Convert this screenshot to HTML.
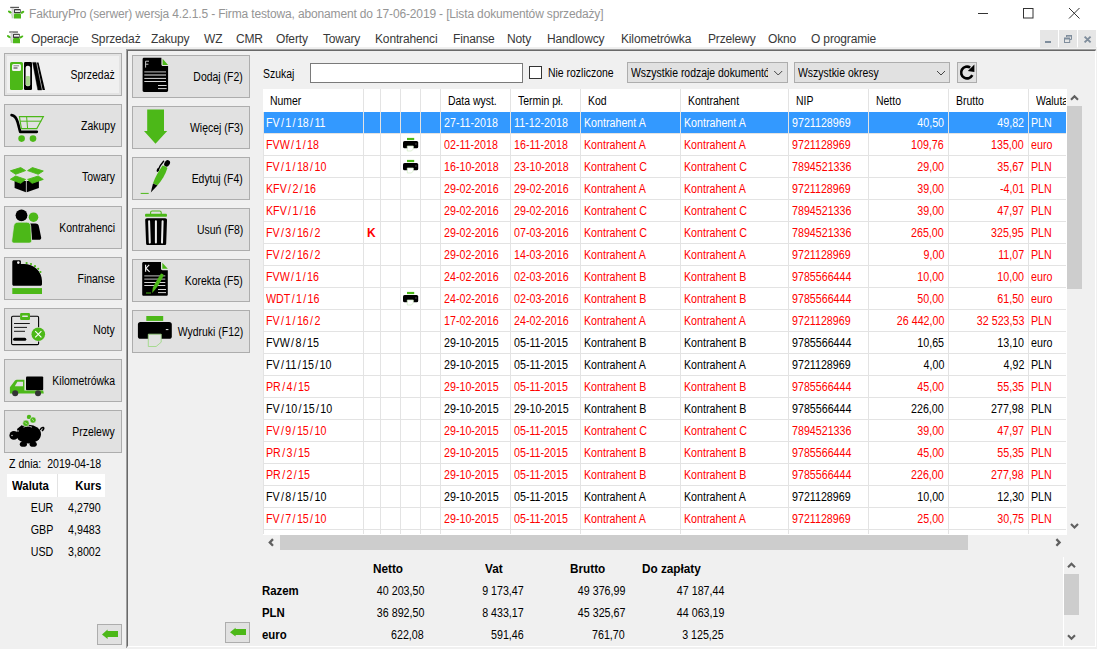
<!DOCTYPE html><html><head><meta charset="utf-8"><style>
*{margin:0;padding:0;box-sizing:border-box}
html,body{width:1097px;height:649px;overflow:hidden;background:#f0f0f0;font-family:"Liberation Sans",sans-serif;font-size:11px;color:#000;position:relative}
.a{position:absolute}
.t{position:absolute;white-space:nowrap;line-height:13px;height:13px}
.g{font-size:12px;transform:scaleX(0.89);transform-origin:0 0}
.g.ra{transform-origin:100% 0}
.r{color:#ff0000}
.w{color:#fff}
.btn{position:absolute;background:#e1e1e1;border:1px solid #adadad}
.bl{position:absolute;right:6px;top:15px;font-size:11px;line-height:13px;text-align:right;white-space:nowrap;letter-spacing:-0.2px}
</style></head><body>
<div class="a" style="left:0;top:0;width:1097px;height:47px;background:#fff"></div>
<div class="t " style="left:29px;top:8px;font-size:12px;line-height:12px;height:12px;color:#959595;letter-spacing:-0.15px">FakturyPro (serwer) wersja 4.2.1.5 - Firma testowa, abonament do 17-06-2019 - [Lista dokumentów sprzedaży]</div>
<div class="t " style="left:31px;top:33px;font-size:12px;line-height:12px;height:12px;color:#383838;letter-spacing:-0.15px">Operacje</div>
<div class="t " style="left:91px;top:33px;font-size:12px;line-height:12px;height:12px;color:#383838;letter-spacing:-0.15px">Sprzedaż</div>
<div class="t " style="left:151px;top:33px;font-size:12px;line-height:12px;height:12px;color:#383838;letter-spacing:-0.15px">Zakupy</div>
<div class="t " style="left:204px;top:33px;font-size:12px;line-height:12px;height:12px;color:#383838;letter-spacing:-0.15px">WZ</div>
<div class="t " style="left:236px;top:33px;font-size:12px;line-height:12px;height:12px;color:#383838;letter-spacing:-0.15px">CMR</div>
<div class="t " style="left:276px;top:33px;font-size:12px;line-height:12px;height:12px;color:#383838;letter-spacing:-0.15px">Oferty</div>
<div class="t " style="left:323px;top:33px;font-size:12px;line-height:12px;height:12px;color:#383838;letter-spacing:-0.15px">Towary</div>
<div class="t " style="left:375px;top:33px;font-size:12px;line-height:12px;height:12px;color:#383838;letter-spacing:-0.15px">Kontrahenci</div>
<div class="t " style="left:453px;top:33px;font-size:12px;line-height:12px;height:12px;color:#383838;letter-spacing:-0.15px">Finanse</div>
<div class="t " style="left:507px;top:33px;font-size:12px;line-height:12px;height:12px;color:#383838;letter-spacing:-0.15px">Noty</div>
<div class="t " style="left:547px;top:33px;font-size:12px;line-height:12px;height:12px;color:#383838;letter-spacing:-0.15px">Handlowcy</div>
<div class="t " style="left:621px;top:33px;font-size:12px;line-height:12px;height:12px;color:#383838;letter-spacing:-0.15px">Kilometrówka</div>
<div class="t " style="left:708px;top:33px;font-size:12px;line-height:12px;height:12px;color:#383838;letter-spacing:-0.15px">Przelewy</div>
<div class="t " style="left:768px;top:33px;font-size:12px;line-height:12px;height:12px;color:#383838;letter-spacing:-0.15px">Okno</div>
<div class="t " style="left:811px;top:33px;font-size:12px;line-height:12px;height:12px;color:#383838;letter-spacing:-0.15px">O programie</div>
<div class="a" style="left:1040px;top:30px;width:18px;height:18px;background:#e6e6e6"></div>
<div class="a" style="left:1059px;top:30px;width:18px;height:18px;background:#e6e6e6"></div>
<div class="a" style="left:1078px;top:30px;width:18px;height:18px;background:#e6e6e6"></div>
<div class="a" style="left:126px;top:49px;width:970px;height:599px;border-left:1px solid #a0a0a0;border-top:1px solid #a0a0a0"></div>
<div class="a" style="left:127px;top:50px;width:969px;height:597px;border-left:1px solid #696969;border-top:1px solid #696969;border-right:1px solid #fff;border-bottom:1px solid #fff"></div>
<div class="btn" style="left:4px;top:53px;width:118px;height:43px;background:#f0f0f0;box-shadow:inset 0 0 0 2px #e3e3e3"></div>
<div class="t g ra" style="left:0px;top:69px;right:982px;left:auto;transform:scaleX(0.87)">Sprzedaż</div>
<div class="btn" style="left:4px;top:104px;width:118px;height:43px"></div>
<div class="t g ra" style="left:0px;top:120px;right:982px;left:auto;transform:scaleX(0.87)">Zakupy</div>
<div class="btn" style="left:4px;top:155px;width:118px;height:43px"></div>
<div class="t g ra" style="left:0px;top:171px;right:982px;left:auto;transform:scaleX(0.87)">Towary</div>
<div class="btn" style="left:4px;top:206px;width:118px;height:43px"></div>
<div class="t g ra" style="left:0px;top:222px;right:982px;left:auto;transform:scaleX(0.87)">Kontrahenci</div>
<div class="btn" style="left:4px;top:257px;width:118px;height:43px"></div>
<div class="t g ra" style="left:0px;top:273px;right:982px;left:auto;transform:scaleX(0.87)">Finanse</div>
<div class="btn" style="left:4px;top:308px;width:118px;height:43px"></div>
<div class="t g ra" style="left:0px;top:324px;right:982px;left:auto;transform:scaleX(0.87)">Noty</div>
<div class="btn" style="left:4px;top:359px;width:118px;height:43px"></div>
<div class="t g ra" style="left:0px;top:375px;right:982px;left:auto;transform:scaleX(0.87)">Kilometrówka</div>
<div class="btn" style="left:4px;top:410px;width:118px;height:43px"></div>
<div class="t g ra" style="left:0px;top:426px;right:982px;left:auto;transform:scaleX(0.87)">Przelewy</div>
<div class="btn" style="left:132px;top:55px;width:118px;height:43px"></div>
<div class="t g ra" style="left:0px;top:71px;right:854px;left:auto;transform:scaleX(0.87)">Dodaj (F2)</div>
<div class="btn" style="left:132px;top:106px;width:118px;height:43px"></div>
<div class="t g ra" style="left:0px;top:122px;right:854px;left:auto;transform:scaleX(0.87)">Więcej (F3)</div>
<div class="btn" style="left:132px;top:157px;width:118px;height:43px"></div>
<div class="t g ra" style="left:0px;top:173px;right:854px;left:auto;transform:scaleX(0.87)">Edytuj (F4)</div>
<div class="btn" style="left:132px;top:208px;width:118px;height:43px"></div>
<div class="t g ra" style="left:0px;top:224px;right:854px;left:auto;transform:scaleX(0.87)">Usuń (F8)</div>
<div class="btn" style="left:132px;top:259px;width:118px;height:43px"></div>
<div class="t g ra" style="left:0px;top:275px;right:854px;left:auto;transform:scaleX(0.87)">Korekta (F5)</div>
<div class="btn" style="left:132px;top:310px;width:118px;height:43px"></div>
<div class="t g ra" style="left:0px;top:326px;right:854px;left:auto;transform:scaleX(0.87)">Wydruki (F12)</div>
<div class="t g" style="left:263px;top:68px;transform:scaleX(0.87)">Szukaj</div>
<div class="a" style="left:310px;top:63px;width:213px;height:20px;background:#fff;border:1px solid #7a7a7a"></div>
<div class="a" style="left:529px;top:66px;width:13px;height:13px;background:#fff;border:1px solid #333"></div>
<div class="t g" style="left:548px;top:67px;transform:scaleX(0.87)">Nie rozliczone</div>
<div class="a" style="left:627px;top:62px;width:161px;height:21px;background:#e1e1e1;border:1px solid #adadad"></div>
<div class="a" style="left:631px;top:67px;width:137px;height:14px;overflow:hidden"><div class="t g" style="left:0px;top:0px;transform:scaleX(0.87)">Wszystkie rodzaje dokumentów</div></div>
<div class="a" style="left:794px;top:62px;width:156px;height:21px;background:#e1e1e1;border:1px solid #adadad"></div>
<div class="t g" style="left:798px;top:67px;transform:scaleX(0.87)">Wszystkie okresy</div>
<div class="a" style="left:957px;top:62px;width:20px;height:21px;background:#e1e1e1;border:1px solid #adadad"></div>
<div class="a" style="left:263px;top:89px;width:804px;height:446px;background:#fff"></div>
<div class="a" style="left:264px;top:112px;width:802px;height:21px;background:#3399ff"></div>
<div class="a" style="left:264px;top:133px;width:802px;height:1px;background:#e3e3e3"></div>
<div class="a" style="left:264px;top:155px;width:802px;height:1px;background:#e3e3e3"></div>
<div class="a" style="left:264px;top:177px;width:802px;height:1px;background:#e3e3e3"></div>
<div class="a" style="left:264px;top:199px;width:802px;height:1px;background:#e3e3e3"></div>
<div class="a" style="left:264px;top:221px;width:802px;height:1px;background:#e3e3e3"></div>
<div class="a" style="left:264px;top:243px;width:802px;height:1px;background:#e3e3e3"></div>
<div class="a" style="left:264px;top:265px;width:802px;height:1px;background:#e3e3e3"></div>
<div class="a" style="left:264px;top:287px;width:802px;height:1px;background:#e3e3e3"></div>
<div class="a" style="left:264px;top:309px;width:802px;height:1px;background:#e3e3e3"></div>
<div class="a" style="left:264px;top:331px;width:802px;height:1px;background:#e3e3e3"></div>
<div class="a" style="left:264px;top:353px;width:802px;height:1px;background:#e3e3e3"></div>
<div class="a" style="left:264px;top:375px;width:802px;height:1px;background:#e3e3e3"></div>
<div class="a" style="left:264px;top:397px;width:802px;height:1px;background:#e3e3e3"></div>
<div class="a" style="left:264px;top:419px;width:802px;height:1px;background:#e3e3e3"></div>
<div class="a" style="left:264px;top:441px;width:802px;height:1px;background:#e3e3e3"></div>
<div class="a" style="left:264px;top:463px;width:802px;height:1px;background:#e3e3e3"></div>
<div class="a" style="left:264px;top:485px;width:802px;height:1px;background:#e3e3e3"></div>
<div class="a" style="left:264px;top:507px;width:802px;height:1px;background:#e3e3e3"></div>
<div class="a" style="left:264px;top:529px;width:802px;height:1px;background:#e3e3e3"></div>
<div class="a" style="left:363px;top:89px;width:1px;height:445px;background:#e3e3e3"></div>
<div class="a" style="left:380px;top:89px;width:1px;height:445px;background:#e3e3e3"></div>
<div class="a" style="left:400px;top:89px;width:1px;height:445px;background:#e3e3e3"></div>
<div class="a" style="left:420px;top:89px;width:1px;height:445px;background:#e3e3e3"></div>
<div class="a" style="left:440px;top:89px;width:1px;height:445px;background:#e3e3e3"></div>
<div class="a" style="left:510px;top:89px;width:1px;height:445px;background:#e3e3e3"></div>
<div class="a" style="left:580px;top:89px;width:1px;height:445px;background:#e3e3e3"></div>
<div class="a" style="left:680px;top:89px;width:1px;height:445px;background:#e3e3e3"></div>
<div class="a" style="left:788px;top:89px;width:1px;height:445px;background:#e3e3e3"></div>
<div class="a" style="left:868px;top:89px;width:1px;height:445px;background:#e3e3e3"></div>
<div class="a" style="left:948px;top:89px;width:1px;height:445px;background:#e3e3e3"></div>
<div class="a" style="left:1028px;top:89px;width:1px;height:445px;background:#e3e3e3"></div>
<div class="a" style="left:263px;top:112px;width:1px;height:422px;background:#e3e3e3"></div>
<div class="t g" style="left:270px;top:95px;transform:scaleX(0.87)">Numer</div>
<div class="t g" style="left:448px;top:95px;transform:scaleX(0.87)">Data wyst.</div>
<div class="t g" style="left:518px;top:95px;transform:scaleX(0.87)">Termin pł.</div>
<div class="t g" style="left:588px;top:95px;transform:scaleX(0.87)">Kod</div>
<div class="t g" style="left:688px;top:95px;transform:scaleX(0.87)">Kontrahent</div>
<div class="t g" style="left:796px;top:95px;transform:scaleX(0.87)">NIP</div>
<div class="t g" style="left:876px;top:95px;transform:scaleX(0.87)">Netto</div>
<div class="t g" style="left:956px;top:95px;transform:scaleX(0.87)">Brutto</div>
<div class="a" style="left:1036px;top:95px;width:30px;height:14px;overflow:hidden"><div class="t g" style="left:0px;top:0px;transform:scaleX(0.87)">Waluta</div></div>
<div class="t w g" style="left:266px;top:117px;">FV<span style="margin:0 1.5px">/</span>1<span style="margin:0 1.5px">/</span>18<span style="margin:0 1.5px">/</span>11</div>
<div class="t w g" style="left:444px;top:117px;">27-11-2018</div>
<div class="t w g" style="left:514px;top:117px;">11-12-2018</div>
<div class="t w g" style="left:584px;top:117px;">Kontrahent A</div>
<div class="t w g" style="left:684px;top:117px;">Kontrahent A</div>
<div class="t w g" style="left:792px;top:117px;">9721128969</div>
<div class="t w g ra" style="left:0px;top:117px;left:auto;right:153px">40,50</div>
<div class="t w g ra" style="left:0px;top:117px;left:auto;right:73px">49,82</div>
<div class="t w g" style="left:1031px;top:117px;">PLN</div>
<div class="t r g" style="left:266px;top:139px;">FVW<span style="margin:0 1.5px">/</span>1<span style="margin:0 1.5px">/</span>18</div>
<div class="t r g" style="left:444px;top:139px;">02-11-2018</div>
<div class="t r g" style="left:514px;top:139px;">16-11-2018</div>
<div class="t r g" style="left:584px;top:139px;">Kontrahent A</div>
<div class="t r g" style="left:684px;top:139px;">Kontrahent A</div>
<div class="t r g" style="left:792px;top:139px;">9721128969</div>
<div class="t r g ra" style="left:0px;top:139px;left:auto;right:153px">109,76</div>
<div class="t r g ra" style="left:0px;top:139px;left:auto;right:73px">135,00</div>
<div class="t r g" style="left:1031px;top:139px;">euro</div>
<div class="t r g" style="left:266px;top:161px;">FV<span style="margin:0 1.5px">/</span>1<span style="margin:0 1.5px">/</span>18<span style="margin:0 1.5px">/</span>10</div>
<div class="t r g" style="left:444px;top:161px;">16-10-2018</div>
<div class="t r g" style="left:514px;top:161px;">23-10-2018</div>
<div class="t r g" style="left:584px;top:161px;">Kontrahent C</div>
<div class="t r g" style="left:684px;top:161px;">Kontrahent C</div>
<div class="t r g" style="left:792px;top:161px;">7894521336</div>
<div class="t r g ra" style="left:0px;top:161px;left:auto;right:153px">29,00</div>
<div class="t r g ra" style="left:0px;top:161px;left:auto;right:73px">35,67</div>
<div class="t r g" style="left:1031px;top:161px;">PLN</div>
<div class="t r g" style="left:266px;top:183px;">KFV<span style="margin:0 1.5px">/</span>2<span style="margin:0 1.5px">/</span>16</div>
<div class="t r g" style="left:444px;top:183px;">29-02-2016</div>
<div class="t r g" style="left:514px;top:183px;">29-02-2016</div>
<div class="t r g" style="left:584px;top:183px;">Kontrahent A</div>
<div class="t r g" style="left:684px;top:183px;">Kontrahent A</div>
<div class="t r g" style="left:792px;top:183px;">9721128969</div>
<div class="t r g ra" style="left:0px;top:183px;left:auto;right:153px">39,00</div>
<div class="t r g ra" style="left:0px;top:183px;left:auto;right:73px">-4,01</div>
<div class="t r g" style="left:1031px;top:183px;">PLN</div>
<div class="t r g" style="left:266px;top:205px;">KFV<span style="margin:0 1.5px">/</span>1<span style="margin:0 1.5px">/</span>16</div>
<div class="t r g" style="left:444px;top:205px;">29-02-2016</div>
<div class="t r g" style="left:514px;top:205px;">29-02-2016</div>
<div class="t r g" style="left:584px;top:205px;">Kontrahent C</div>
<div class="t r g" style="left:684px;top:205px;">Kontrahent C</div>
<div class="t r g" style="left:792px;top:205px;">7894521336</div>
<div class="t r g ra" style="left:0px;top:205px;left:auto;right:153px">39,00</div>
<div class="t r g ra" style="left:0px;top:205px;left:auto;right:73px">47,97</div>
<div class="t r g" style="left:1031px;top:205px;">PLN</div>
<div class="t r g" style="left:266px;top:227px;">FV<span style="margin:0 1.5px">/</span>3<span style="margin:0 1.5px">/</span>16<span style="margin:0 1.5px">/</span>2</div>
<div class="t r" style="left:367px;top:227px;font-weight:bold;font-size:12px">K</div>
<div class="t r g" style="left:444px;top:227px;">29-02-2016</div>
<div class="t r g" style="left:514px;top:227px;">07-03-2016</div>
<div class="t r g" style="left:584px;top:227px;">Kontrahent C</div>
<div class="t r g" style="left:684px;top:227px;">Kontrahent C</div>
<div class="t r g" style="left:792px;top:227px;">7894521336</div>
<div class="t r g ra" style="left:0px;top:227px;left:auto;right:153px">265,00</div>
<div class="t r g ra" style="left:0px;top:227px;left:auto;right:73px">325,95</div>
<div class="t r g" style="left:1031px;top:227px;">PLN</div>
<div class="t r g" style="left:266px;top:249px;">FV<span style="margin:0 1.5px">/</span>2<span style="margin:0 1.5px">/</span>16<span style="margin:0 1.5px">/</span>2</div>
<div class="t r g" style="left:444px;top:249px;">29-02-2016</div>
<div class="t r g" style="left:514px;top:249px;">14-03-2016</div>
<div class="t r g" style="left:584px;top:249px;">Kontrahent A</div>
<div class="t r g" style="left:684px;top:249px;">Kontrahent A</div>
<div class="t r g" style="left:792px;top:249px;">9721128969</div>
<div class="t r g ra" style="left:0px;top:249px;left:auto;right:153px">9,00</div>
<div class="t r g ra" style="left:0px;top:249px;left:auto;right:73px">11,07</div>
<div class="t r g" style="left:1031px;top:249px;">PLN</div>
<div class="t r g" style="left:266px;top:271px;">FVW<span style="margin:0 1.5px">/</span>1<span style="margin:0 1.5px">/</span>16</div>
<div class="t r g" style="left:444px;top:271px;">24-02-2016</div>
<div class="t r g" style="left:514px;top:271px;">02-03-2016</div>
<div class="t r g" style="left:584px;top:271px;">Kontrahent B</div>
<div class="t r g" style="left:684px;top:271px;">Kontrahent B</div>
<div class="t r g" style="left:792px;top:271px;">9785566444</div>
<div class="t r g ra" style="left:0px;top:271px;left:auto;right:153px">10,00</div>
<div class="t r g ra" style="left:0px;top:271px;left:auto;right:73px">10,00</div>
<div class="t r g" style="left:1031px;top:271px;">euro</div>
<div class="t r g" style="left:266px;top:293px;">WDT<span style="margin:0 1.5px">/</span>1<span style="margin:0 1.5px">/</span>16</div>
<div class="t r g" style="left:444px;top:293px;">24-02-2016</div>
<div class="t r g" style="left:514px;top:293px;">02-03-2016</div>
<div class="t r g" style="left:584px;top:293px;">Kontrahent B</div>
<div class="t r g" style="left:684px;top:293px;">Kontrahent B</div>
<div class="t r g" style="left:792px;top:293px;">9785566444</div>
<div class="t r g ra" style="left:0px;top:293px;left:auto;right:153px">50,00</div>
<div class="t r g ra" style="left:0px;top:293px;left:auto;right:73px">61,50</div>
<div class="t r g" style="left:1031px;top:293px;">euro</div>
<div class="t r g" style="left:266px;top:315px;">FV<span style="margin:0 1.5px">/</span>1<span style="margin:0 1.5px">/</span>16<span style="margin:0 1.5px">/</span>2</div>
<div class="t r g" style="left:444px;top:315px;">17-02-2016</div>
<div class="t r g" style="left:514px;top:315px;">24-02-2016</div>
<div class="t r g" style="left:584px;top:315px;">Kontrahent A</div>
<div class="t r g" style="left:684px;top:315px;">Kontrahent A</div>
<div class="t r g" style="left:792px;top:315px;">9721128969</div>
<div class="t r g ra" style="left:0px;top:315px;left:auto;right:153px">26 442,00</div>
<div class="t r g ra" style="left:0px;top:315px;left:auto;right:73px">32 523,53</div>
<div class="t r g" style="left:1031px;top:315px;">PLN</div>
<div class="t  g" style="left:266px;top:337px;">FVW<span style="margin:0 1.5px">/</span>8<span style="margin:0 1.5px">/</span>15</div>
<div class="t  g" style="left:444px;top:337px;">29-10-2015</div>
<div class="t  g" style="left:514px;top:337px;">05-11-2015</div>
<div class="t  g" style="left:584px;top:337px;">Kontrahent B</div>
<div class="t  g" style="left:684px;top:337px;">Kontrahent B</div>
<div class="t  g" style="left:792px;top:337px;">9785566444</div>
<div class="t  g ra" style="left:0px;top:337px;left:auto;right:153px">10,65</div>
<div class="t  g ra" style="left:0px;top:337px;left:auto;right:73px">13,10</div>
<div class="t  g" style="left:1031px;top:337px;">euro</div>
<div class="t  g" style="left:266px;top:359px;">FV<span style="margin:0 1.5px">/</span>11<span style="margin:0 1.5px">/</span>15<span style="margin:0 1.5px">/</span>10</div>
<div class="t  g" style="left:444px;top:359px;">29-10-2015</div>
<div class="t  g" style="left:514px;top:359px;">05-11-2015</div>
<div class="t  g" style="left:584px;top:359px;">Kontrahent A</div>
<div class="t  g" style="left:684px;top:359px;">Kontrahent A</div>
<div class="t  g" style="left:792px;top:359px;">9721128969</div>
<div class="t  g ra" style="left:0px;top:359px;left:auto;right:153px">4,00</div>
<div class="t  g ra" style="left:0px;top:359px;left:auto;right:73px">4,92</div>
<div class="t  g" style="left:1031px;top:359px;">PLN</div>
<div class="t r g" style="left:266px;top:381px;">PR<span style="margin:0 1.5px">/</span>4<span style="margin:0 1.5px">/</span>15</div>
<div class="t r g" style="left:444px;top:381px;">29-10-2015</div>
<div class="t r g" style="left:514px;top:381px;">05-11-2015</div>
<div class="t r g" style="left:584px;top:381px;">Kontrahent B</div>
<div class="t r g" style="left:684px;top:381px;">Kontrahent B</div>
<div class="t r g" style="left:792px;top:381px;">9785566444</div>
<div class="t r g ra" style="left:0px;top:381px;left:auto;right:153px">45,00</div>
<div class="t r g ra" style="left:0px;top:381px;left:auto;right:73px">55,35</div>
<div class="t r g" style="left:1031px;top:381px;">PLN</div>
<div class="t  g" style="left:266px;top:403px;">FV<span style="margin:0 1.5px">/</span>10<span style="margin:0 1.5px">/</span>15<span style="margin:0 1.5px">/</span>10</div>
<div class="t  g" style="left:444px;top:403px;">29-10-2015</div>
<div class="t  g" style="left:514px;top:403px;">29-10-2015</div>
<div class="t  g" style="left:584px;top:403px;">Kontrahent B</div>
<div class="t  g" style="left:684px;top:403px;">Kontrahent B</div>
<div class="t  g" style="left:792px;top:403px;">9785566444</div>
<div class="t  g ra" style="left:0px;top:403px;left:auto;right:153px">226,00</div>
<div class="t  g ra" style="left:0px;top:403px;left:auto;right:73px">277,98</div>
<div class="t  g" style="left:1031px;top:403px;">PLN</div>
<div class="t r g" style="left:266px;top:425px;">FV<span style="margin:0 1.5px">/</span>9<span style="margin:0 1.5px">/</span>15<span style="margin:0 1.5px">/</span>10</div>
<div class="t r g" style="left:444px;top:425px;">29-10-2015</div>
<div class="t r g" style="left:514px;top:425px;">05-11-2015</div>
<div class="t r g" style="left:584px;top:425px;">Kontrahent C</div>
<div class="t r g" style="left:684px;top:425px;">Kontrahent C</div>
<div class="t r g" style="left:792px;top:425px;">7894521336</div>
<div class="t r g ra" style="left:0px;top:425px;left:auto;right:153px">39,00</div>
<div class="t r g ra" style="left:0px;top:425px;left:auto;right:73px">47,97</div>
<div class="t r g" style="left:1031px;top:425px;">PLN</div>
<div class="t r g" style="left:266px;top:447px;">PR<span style="margin:0 1.5px">/</span>3<span style="margin:0 1.5px">/</span>15</div>
<div class="t r g" style="left:444px;top:447px;">29-10-2015</div>
<div class="t r g" style="left:514px;top:447px;">05-11-2015</div>
<div class="t r g" style="left:584px;top:447px;">Kontrahent B</div>
<div class="t r g" style="left:684px;top:447px;">Kontrahent B</div>
<div class="t r g" style="left:792px;top:447px;">9785566444</div>
<div class="t r g ra" style="left:0px;top:447px;left:auto;right:153px">45,00</div>
<div class="t r g ra" style="left:0px;top:447px;left:auto;right:73px">55,35</div>
<div class="t r g" style="left:1031px;top:447px;">PLN</div>
<div class="t r g" style="left:266px;top:469px;">PR<span style="margin:0 1.5px">/</span>2<span style="margin:0 1.5px">/</span>15</div>
<div class="t r g" style="left:444px;top:469px;">29-10-2015</div>
<div class="t r g" style="left:514px;top:469px;">05-11-2015</div>
<div class="t r g" style="left:584px;top:469px;">Kontrahent B</div>
<div class="t r g" style="left:684px;top:469px;">Kontrahent B</div>
<div class="t r g" style="left:792px;top:469px;">9785566444</div>
<div class="t r g ra" style="left:0px;top:469px;left:auto;right:153px">226,00</div>
<div class="t r g ra" style="left:0px;top:469px;left:auto;right:73px">277,98</div>
<div class="t r g" style="left:1031px;top:469px;">PLN</div>
<div class="t  g" style="left:266px;top:491px;">FV<span style="margin:0 1.5px">/</span>8<span style="margin:0 1.5px">/</span>15<span style="margin:0 1.5px">/</span>10</div>
<div class="t  g" style="left:444px;top:491px;">29-10-2015</div>
<div class="t  g" style="left:514px;top:491px;">05-11-2015</div>
<div class="t  g" style="left:584px;top:491px;">Kontrahent A</div>
<div class="t  g" style="left:684px;top:491px;">Kontrahent A</div>
<div class="t  g" style="left:792px;top:491px;">9721128969</div>
<div class="t  g ra" style="left:0px;top:491px;left:auto;right:153px">10,00</div>
<div class="t  g ra" style="left:0px;top:491px;left:auto;right:73px">12,30</div>
<div class="t  g" style="left:1031px;top:491px;">PLN</div>
<div class="t r g" style="left:266px;top:513px;">FV<span style="margin:0 1.5px">/</span>7<span style="margin:0 1.5px">/</span>15<span style="margin:0 1.5px">/</span>10</div>
<div class="t r g" style="left:444px;top:513px;">29-10-2015</div>
<div class="t r g" style="left:514px;top:513px;">05-11-2015</div>
<div class="t r g" style="left:584px;top:513px;">Kontrahent A</div>
<div class="t r g" style="left:684px;top:513px;">Kontrahent A</div>
<div class="t r g" style="left:792px;top:513px;">9721128969</div>
<div class="t r g ra" style="left:0px;top:513px;left:auto;right:153px">25,00</div>
<div class="t r g ra" style="left:0px;top:513px;left:auto;right:73px">30,75</div>
<div class="t r g" style="left:1031px;top:513px;">PLN</div>
<div class="a" style="left:1067px;top:106px;width:15px;height:183px;background:#cdcdcd"></div>
<div class="a" style="left:280px;top:535px;width:688px;height:15px;background:#cdcdcd"></div>
<div class="t g" style="left:373px;top:563px;font-weight:bold;transform:scaleX(0.98)">Netto</div>
<div class="t g" style="left:485px;top:563px;font-weight:bold;transform:scaleX(0.98)">Vat</div>
<div class="t g" style="left:570px;top:563px;font-weight:bold;transform:scaleX(0.98)">Brutto</div>
<div class="t g" style="left:642px;top:563px;font-weight:bold;transform:scaleX(0.98)">Do zapłaty</div>
<div class="t g" style="left:262px;top:585px;font-weight:bold;transform:scaleX(0.95)">Razem</div>
<div class="t g ra" style="left:0px;top:585px;left:auto;right:673px">40 203,50</div>
<div class="t g ra" style="left:0px;top:585px;left:auto;right:573px">9 173,47</div>
<div class="t g ra" style="left:0px;top:585px;left:auto;right:472px">49 376,99</div>
<div class="t g ra" style="left:0px;top:585px;left:auto;right:373px">47 187,44</div>
<div class="t g" style="left:262px;top:607px;font-weight:bold;transform:scaleX(0.95)">PLN</div>
<div class="t g ra" style="left:0px;top:607px;left:auto;right:673px">36 892,50</div>
<div class="t g ra" style="left:0px;top:607px;left:auto;right:573px">8 433,17</div>
<div class="t g ra" style="left:0px;top:607px;left:auto;right:472px">45 325,67</div>
<div class="t g ra" style="left:0px;top:607px;left:auto;right:373px">44 063,19</div>
<div class="t g" style="left:262px;top:629px;font-weight:bold;transform:scaleX(0.95)">euro</div>
<div class="t g ra" style="left:0px;top:629px;left:auto;right:673px">622,08</div>
<div class="t g ra" style="left:0px;top:629px;left:auto;right:573px">591,46</div>
<div class="t g ra" style="left:0px;top:629px;left:auto;right:472px">761,70</div>
<div class="t g ra" style="left:0px;top:629px;left:auto;right:373px">3 125,25</div>
<div class="a" style="left:1063px;top:557px;width:1px;height:89px;background:#fff"></div>
<div class="a" style="left:1064px;top:574px;width:15px;height:41px;background:#cdcdcd"></div>
<div class="t g" style="left:9px;top:458px;transform:scaleX(0.88)">Z dnia:&nbsp; 2019-04-18</div>
<div class="a" style="left:7px;top:474px;width:98px;height:23px;background:#fff"></div>
<div class="a" style="left:57px;top:474px;width:1px;height:23px;background:#e3e3e3"></div>
<div class="t g" style="left:12px;top:480px;font-weight:bold;transform:scaleX(0.95)">Waluta</div>
<div class="t g ra" style="left:0px;top:480px;right:996px;left:auto;font-weight:bold;transform:scaleX(0.95)">Kurs</div>
<div class="t g ra" style="left:0px;top:502px;left:auto;right:1044px">EUR</div>
<div class="t g ra" style="left:0px;top:502px;left:auto;right:996px">4,2790</div>
<div class="t g ra" style="left:0px;top:524px;left:auto;right:1044px">GBP</div>
<div class="t g ra" style="left:0px;top:524px;left:auto;right:996px">4,9483</div>
<div class="t g ra" style="left:0px;top:546px;left:auto;right:1044px">USD</div>
<div class="t g ra" style="left:0px;top:546px;left:auto;right:996px">3,8002</div>
<div class="btn" style="left:97px;top:624px;width:25px;height:21px"></div>
<div class="btn" style="left:225px;top:622px;width:25px;height:21px"></div>
<svg class="a" style="left:0;top:0" width="1097" height="649"><rect x="10" y="62" width="13" height="28" rx="1.6" fill="#4cb818"/>
<rect x="12" y="64" width="9" height="7" rx="1.6" fill="#f2f2f2"/>
<path d="M13.5 65.8H19" stroke="#777" stroke-width="0.9"/><path d="M13.5 68H17.5" stroke="#333" stroke-width="1"/>
<rect x="24" y="62" width="8" height="28" rx="1.2" fill="#000"/>
<rect x="25.6" y="65.8" width="4.6" height="20.4" rx="2" fill="#f2f2f2"/>
<rect x="25.9" y="76" width="4" height="9.8" rx="1" fill="#a6d68a"/>
<path d="M32.6 62.4L36.1 62.4L41.8 90L37.8 90Z" fill="#000" stroke="#000" stroke-width="0.4" stroke-linejoin="round"/>
<path d="M36.9 62.6L38.5 62.6L45 90L42.6 90Z" fill="#000"/>
<path d="M11.6 115.2C14.6 115.6 16.4 118 17.6 122L20.2 131.8H36.8" fill="none" stroke="#000" stroke-width="2.7" stroke-linecap="round" stroke-linejoin="round"/>
<path d="M19.4 116.6H43.4L36.8 128.6H21.4Z" fill="none" stroke="#4cb818" stroke-width="1.1"/>
<path d="M20.2 121.2H41.2M26.6 116.6L27.6 128.6" fill="none" stroke="#4cb818" stroke-width="1"/>
<circle cx="21.6" cy="138.6" r="3.3" fill="#4cb818"/><circle cx="33" cy="138.6" r="3.3" fill="#4cb818"/>
<path d="M14.6 181H25.9V192.2L14.6 188Z" fill="#000"/>
<path d="M26.7 181H38.9V188L26.7 192.2Z" fill="#000"/>
<path d="M10.4 170.8L20.7 167.6L25.6 170.6L15.6 174.3Z" fill="#4cb818" stroke="#4cb818" stroke-width="0.9" stroke-linejoin="round"/>
<path d="M27.6 170.6L32.4 167.6L43.3 171L38.2 174.3Z" fill="#4cb818" stroke="#4cb818" stroke-width="0.9" stroke-linejoin="round"/>
<path d="M10.4 179.3L15.6 176L25.6 179.4L20.7 183.3Z" fill="#4cb818" stroke="#4cb818" stroke-width="0.9" stroke-linejoin="round"/>
<path d="M27.6 179.4L38.2 176L43.3 179.4L32.1 183.3Z" fill="#4cb818" stroke="#4cb818" stroke-width="0.9" stroke-linejoin="round"/>
<circle cx="21.5" cy="215.3" r="5.9" fill="#000"/>
<path d="M30.2 223.6H35.4C37.6 223.6 38.6 224.6 39 227L41.2 237.4C41.4 239 40.4 239.8 39 239.8H31.8Z" fill="#000"/>
<circle cx="33.5" cy="217.2" r="4.8" fill="#4cb818"/>
<path d="M18 222.2H26.6C29.4 222.2 30.6 223.8 30.8 226.6L31.6 240.4C31.7 242.2 30.7 243.1 28.9 243.1H14.5C12.7 243.1 11.7 242.2 11.8 240.4L13.6 226.6C13.9 223.8 15.2 222.2 18 222.2Z" fill="#4cb818" stroke="#e1e1e1" stroke-width="0.7"/>
<path d="M13.8 260.2H19.6C20.4 260.2 20.9 260.7 20.9 261.5V263.9H24C33.5 263.9 42 271 42 281V284.2C42 285.1 41.4 285.7 40.5 285.7H13.8C12.9 285.7 12.3 285.1 12.3 284.2V261.7C12.3 260.8 12.9 260.2 13.8 260.2Z" fill="#000"/>
<circle cx="18.3" cy="262.6" r="1.3" fill="#f0f0f0"/>
<circle cx="26.6" cy="263" r="1.1" fill="#4cb818"/>
<circle cx="31" cy="264" r="1.1" fill="#4cb818"/>
<circle cx="35" cy="266.2" r="1.1" fill="#4cb818"/>
<circle cx="38.2" cy="268.8" r="1.1" fill="#4cb818"/>
<circle cx="40.4" cy="272" r="1.1" fill="#4cb818"/>
<rect x="12.3" y="288.1" width="29.7" height="5.9" fill="#4cb818"/>
<path d="M20 316.2H12.8C12.1 316.2 11.6 316.7 11.6 317.4V343.4C11.6 344.1 12.1 344.6 12.8 344.6H37.4C38.1 344.6 38.6 344.1 38.6 343.4V341.5M38.6 327.2V317.4C38.6 316.7 38.1 316.2 37.4 316.2H30" fill="none" stroke="#000" stroke-width="1.1"/>
<rect x="20.1" y="313" width="9.9" height="7" rx="1.2" fill="#4cb818"/>
<rect x="22" y="315.4" width="6" height="1.6" rx="0.8" fill="#e6e6e6"/>
<path d="M14 323.5H29.8M14 327.4H27M14 331.3H25" stroke="#000" stroke-width="0.9"/>
<path d="M14.6 339.2H24.8" stroke="#000" stroke-width="3" stroke-linecap="round"/>
<circle cx="38.3" cy="334.3" r="6.8" fill="#4cb818"/>
<path d="M35.2 331.2L41.4 337.4M41.4 331.2L35.2 337.4" stroke="#fff" stroke-width="1.1"/>
<rect x="26" y="376.6" width="17.2" height="13.6" rx="1" fill="#000"/>
<path d="M9.9 387.2L15 380.6C15.4 380 16 379.8 16.8 379.8H24.4V390.4H43.2L43.8 393.6H9.9Z" fill="#4cb818"/>
<path d="M14.8 386.2L17.4 381.8H23V386.2Z" fill="#e1e1e1"/>
<circle cx="15.2" cy="393.3" r="3" fill="#333"/><circle cx="38" cy="393.3" r="3" fill="#333"/>
<ellipse cx="28.6" cy="434.2" rx="12.4" ry="9.4" fill="#000"/>
<circle cx="13.8" cy="435.4" r="4.4" fill="#000"/>
<path d="M17 429L22 425L24 428L20 438Z" fill="#000"/>
<ellipse cx="23.4" cy="444.2" rx="3.6" ry="2.6" fill="#000"/><ellipse cx="33.2" cy="444.2" rx="3.6" ry="2.6" fill="#000"/>
<path d="M40 430C41 428 42 427 43.4 427.6C44.2 428.6 43.2 430 42 431" stroke="#000" stroke-width="1.6" fill="none"/>
<path d="M23.5 427.2C26 425.8 29 425.8 32 427.2" stroke="#e1e1e1" stroke-width="0.8" fill="none"/>
<circle cx="12" cy="435.5" r="0.7" fill="#e1e1e1"/><circle cx="18" cy="431" r="0.8" fill="#e1e1e1"/>
<circle cx="29" cy="416.9" r="2.2" fill="#4cb818"/><circle cx="33" cy="420" r="3.1" fill="#4cb818" stroke="#e1e1e1" stroke-width="0.6"/><circle cx="26" cy="423.3" r="3.2" fill="#4cb818" stroke="#e1e1e1" stroke-width="0.6"/>
<path d="M32 418.6L34 421.4M24.6 422.4L27.4 424.2" stroke="#cfeac0" stroke-width="0.7"/>
<path d="M144 57.8H161.4V64.6C161.4 65.5 162 66.1 162.9 66.1H168.1V90.6C168.1 91.4 167.5 92 166.7 92H144C143.2 92 142.6 91.4 142.6 90.6V59.2C142.6 58.4 143.2 57.8 144 57.8Z" fill="#000"/>
<path d="M162.6 58.7L168.1 64.9H162.6Z" fill="#4cb818"/>
<path d="M145.6 67.6V61.2H149M145.6 64.2H148.4" stroke="#ddd" stroke-width="0.9" fill="none"/>
<path d="M144.3 71.8H166M144.3 75H166" stroke="#999" stroke-width="1.3"/>
<path d="M144.3 78.4H166M144.3 81.5H166M158 85.5H166.6M158 88.6H166.6" stroke="#eee" stroke-width="0.9"/>
<path d="M147.2 109.4H164V131.1H167.2L155.5 143.8L144 131.1H147.2Z" fill="#4cb818"/>
<ellipse cx="167.1" cy="163.4" rx="2.6" ry="3.5" transform="rotate(32 167.1 163.4)" fill="#000"/>
<path d="M163.6 161.3Q160.2 164.8 157.8 170.8" stroke="#000" stroke-width="1.4" stroke-linecap="round" fill="none"/>
<ellipse cx="157.9" cy="170" rx="1.1" ry="2" transform="rotate(25 157.9 170)" fill="#000"/>
<path d="M162.6 165.5C164.8 166 166.4 166.9 167.4 167.9C165.6 174 161.8 180.6 157.4 185.4L153 183.2C155.4 177 158.6 171 162.6 165.5Z" fill="#4cb818"/>
<path d="M153 183.4L157.4 185.6L150.8 192.5Z" fill="#000"/>
<path d="M140.7 193.4H148.7" stroke="#4cb818" stroke-width="1"/>
<path d="M146.2 213.8H165.8C166.6 213.8 167 214.3 167 215.3C167 216.3 166.6 216.8 165.8 216.8H146.2C145.4 216.8 145 216.3 145 215.3C145 214.3 145.4 213.8 146.2 213.8Z" fill="#4cb818"/>
<path d="M150.6 214V212.6C150.6 211.6 151.2 211 152.2 211H159.6C160.6 211 161.2 211.6 161.2 212.6V214" stroke="#4cb818" stroke-width="1.1" fill="none"/>
<path d="M147 218.3H165.2C166.4 218.3 167 219 167 220.2L166.2 243.4C166.2 244.4 165.5 245.1 164.5 245.1H147.8C146.8 245.1 146.1 244.4 146.1 243.4L145.2 220.2C145.2 219 145.8 218.3 147 218.3Z" fill="#000"/>
<path d="M149.1 221.2L149.8 242.6M155.9 221.2V242.6M162.6 221.2L162 242.6" stroke="#eee" stroke-width="2" stroke-linecap="round"/>
<path d="M143.6 261.9H161V268.6C161 269.5 161.6 270.2 162.5 270.2H167.8V294.4C167.8 295.2 167.2 295.8 166.4 295.8H143.6C142.8 295.8 142.2 295.2 142.2 294.4V263.3C142.2 262.5 142.8 261.9 143.6 261.9Z" fill="#000"/>
<path d="M162.3 262.8L167.8 268.7H162.3Z" fill="#4cb818"/>
<path d="M145.6 264.8V271.8M149.2 264.8L146 268.2L149.6 271.8" stroke="#eee" stroke-width="1.15" fill="none"/>
<path d="M144.3 275.8H165.3M144.3 279.2H165.3" stroke="#999" stroke-width="1.2"/>
<path d="M144.3 282.5H165.3M144.3 285.5H165.3M158 289.5H166M158 292.6H166" stroke="#eee" stroke-width="0.9"/>
<path d="M161 273.6C162.2 273.8 163.2 274.4 163.8 275.2C161.6 280 158.6 285 155.6 289L152.1 293L152.8 287.8C155.2 283 158 278 161 273.6Z" fill="#4cb818"/>
<path d="M146 293H151" stroke="#4cb818" stroke-width="1"/>
<rect x="146.3" y="316" width="16.9" height="4.9" fill="#4cb818"/>
<rect x="137.9" y="321.9" width="33.9" height="16.9" rx="2.6" fill="#000"/>
<path d="M165.8 329.6H168.4" stroke="#eee" stroke-width="1"/>
<path d="M148.3 334.2H161.2V342.2L156.1 346.5H148.3Z" fill="#e1e1e1" stroke="#9fd987" stroke-width="0.9"/><rect x="407" y="137.9" width="7.2" height="2.2" fill="#4cb818"/><rect x="403" y="140.9" width="15.2" height="7.4" rx="1.6" fill="#000"/><path d="M415 144H416.8" stroke="#555" stroke-width="0.9"/><path d="M407.3 146H413.3V149L411.4 151H407.3Z" fill="#fff" stroke="#cfe9c2" stroke-width="0.7"/><rect x="407" y="159.9" width="7.2" height="2.2" fill="#4cb818"/><rect x="403" y="162.9" width="15.2" height="7.4" rx="1.6" fill="#000"/><path d="M415 166H416.8" stroke="#555" stroke-width="0.9"/><path d="M407.3 168H413.3V171L411.4 173H407.3Z" fill="#fff" stroke="#cfe9c2" stroke-width="0.7"/><rect x="407" y="291.9" width="7.2" height="2.2" fill="#4cb818"/><rect x="403" y="294.9" width="15.2" height="7.4" rx="1.6" fill="#000"/><path d="M415 298H416.8" stroke="#555" stroke-width="0.9"/><path d="M407.3 300H413.3V303L411.4 305H407.3Z" fill="#fff" stroke="#cfe9c2" stroke-width="0.7"/><g transform="translate(0,0)"><rect x="10.2" y="6.8" width="8.8" height="1.3" fill="#5a5a5a"/><rect x="11.6" y="8" width="2.2" height="10.4" fill="#d4d4d4"/><rect x="14" y="9.1" width="6.7" height="4.2" rx="0.6" fill="#3c3c3c"/><rect x="15" y="10.3" width="5" height="1.7" fill="#f2f2f2"/><path d="M14 14.6Q14 13.4 15.2 13.4H19.8Q21 13.4 21 14.6V18.6H14Z" fill="#4cb818"/><ellipse cx="9.8" cy="12" rx="2.1" ry="1.1" transform="rotate(30 9.8 12)" fill="#4cb818"/><ellipse cx="22.4" cy="12.3" rx="2.1" ry="1.1" transform="rotate(-30 22.4 12.3)" fill="#4cb818"/><path d="M11 13.2L13 18" stroke="#b6e0a0" stroke-width="0.8"/></g>
<g transform="translate(-1,24.6)"><rect x="10.2" y="6.8" width="8.8" height="1.3" fill="#5a5a5a"/><rect x="11.6" y="8" width="2.2" height="10.4" fill="#d4d4d4"/><rect x="14" y="9.1" width="6.7" height="4.2" rx="0.6" fill="#3c3c3c"/><rect x="15" y="10.3" width="5" height="1.7" fill="#f2f2f2"/><path d="M14 14.6Q14 13.4 15.2 13.4H19.8Q21 13.4 21 14.6V18.6H14Z" fill="#4cb818"/><ellipse cx="9.8" cy="12" rx="2.1" ry="1.1" transform="rotate(30 9.8 12)" fill="#4cb818"/><ellipse cx="22.4" cy="12.3" rx="2.1" ry="1.1" transform="rotate(-30 22.4 12.3)" fill="#4cb818"/><path d="M11 13.2L13 18" stroke="#b6e0a0" stroke-width="0.8"/></g>
<path d="M978 13.5H988" stroke="#333" stroke-width="1"/>
<rect x="1023.5" y="8.5" width="9.5" height="9.5" fill="none" stroke="#333" stroke-width="1"/>
<path d="M1069 8L1079.5 18.5M1079.5 8L1069 18.5" stroke="#333" stroke-width="1"/>
<rect x="1045" y="41" width="6" height="2" fill="#7f8d9c"/>
<path d="M1066.5 37V35.5H1071.5V39.5H1070" fill="none" stroke="#7f8d9c" stroke-width="1"/><rect x="1066" y="35" width="6" height="1.6" fill="#7f8d9c"/>
<rect x="1064.5" y="38.2" width="5.2" height="4.3" fill="none" stroke="#7f8d9c" stroke-width="1"/><rect x="1064" y="37.7" width="6" height="1.8" fill="#7f8d9c"/>
<path d="M1084.6 36.6L1090.6 42.4M1090.6 36.6L1084.6 42.4" stroke="#7f8d9c" stroke-width="1.9"/>
<path d="M774.2 71L778.2 75L782.2 71" fill="none" stroke="#444" stroke-width="1"/>
<path d="M937 71L941 75L945 71" fill="none" stroke="#444" stroke-width="1"/>
<path d="M972.3 75.2A5.9 5.9 0 1 1 970.2 67.5" fill="none" stroke="#000" stroke-width="2.6"/>
<path d="M967.8 70.9L974.4 64.5V71.9Z" fill="#000"/>
<path d="M1071.0 99.8L1074.5 96.2L1078.0 99.8" fill="none" stroke="#606060" stroke-width="2.1"/>
<path d="M1071.0 524.0L1074.5 527.5999999999999L1078.0 524.0" fill="none" stroke="#606060" stroke-width="2.1"/>
<path d="M273.0 539.1L269.79999999999995 542.4L273.0 545.6999999999999" fill="none" stroke="#606060" stroke-width="2.3"/>
<path d="M1056.4 539.1L1059.6 542.4L1056.4 545.6999999999999" fill="none" stroke="#606060" stroke-width="2.3"/>
<path d="M1068.0 567.3L1071.5 563.7L1075.0 567.3" fill="none" stroke="#606060" stroke-width="2.1"/>
<path d="M1068.0 635.2L1071.5 638.8L1075.0 635.2" fill="none" stroke="#606060" stroke-width="2.1"/>
<path d="M102 634.4L107.6 629.6V631H118V637H107.6V638.9Z" fill="#4cb818"/>
<path d="M230 632.2L235.6 627.8V629H246V635H235.6V636.5Z" fill="#4cb818"/></svg>
</body></html>
